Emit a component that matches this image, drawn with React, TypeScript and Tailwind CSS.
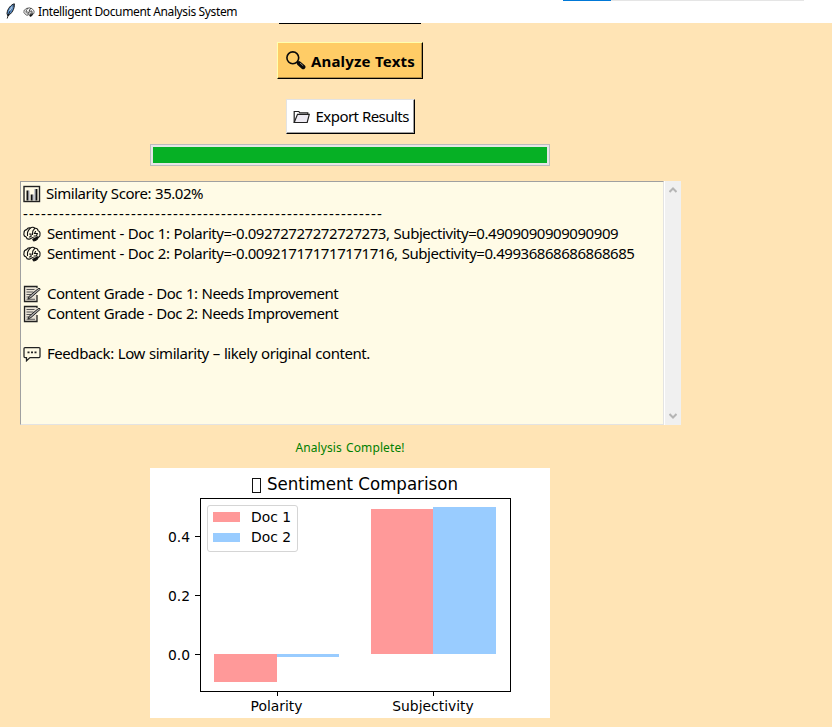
import type { ReactNode } from "react";

const ui = "font-['Noto_Sans','Segoe_UI',sans-serif]";

function Brain({ className }: { className?: string }) {
  return (
    <svg viewBox="0 0 18 16" className={className} fill="none" stroke="#111" strokeWidth="1.1" strokeLinecap="round">
      <path d="M12 12.500 9.500 11.500 7 13c-1.600.4-3.400-.3-3.800-1.900C1.500 10.500.5 9 1 7.300.9 5.400 2 3.800 3.600 3.600 4.500 2.200 6 1.700 7.300 2.100 8.800 1 11 1.300 11.800 2.300c1.900-.2 3 .7 3.200 2.100 1.600.8 2.400 2.200 1.900 3.700.4 1.500-.4 2.900-1.700 3.500" />
      <path d="M7.300 2.100C5.800 3.500 5 5 4.500 6.500M4.500 6.500v3M6.500 8H8v2.500L6.500 11M11.800 2.300 9.800 5M9.800 5 9.500 8.500M12.500 5.500 11.500 7.500h2.800L13.500 10H11" />
      <path d="M14.800 10.800c.4 2.400-1.300 3.600-4 4.200l-1-1.300 2.500-1.700Z" fill="#111" />
    </svg>
  );
}

function BarChart() {
  return (
    <svg viewBox="0 0 18 18" className="h-[18px] w-[18px]" fill="none">
      <rect x="1" y="1.500" width="15.500" height="15" stroke="#222" strokeWidth="1.400" />
      <path d="M4.500 5.500v10M8.700 9.500v6M13.400 4v11.500" stroke="#111" strokeWidth="2" />
      <path d="M6 5.500v10M10.200 9.500v6M11.900 4v11.500" stroke="#8c93ad" strokeWidth=".8" />
    </svg>
  );
}

function Memo() {
  return (
    <svg viewBox="0 0 18 18" className="h-[18px] w-[18px]" fill="none">
      <path d="M14 10v6.500H1.500v-15H14V3" stroke="#222" strokeWidth="1.300" fill="#e9e3d6" />
      <path d="M3.500 4.500h8M3.500 7h7M3.500 9.500h5M3.500 12h3M3.500 14.300h8.500" stroke="#555" strokeWidth="1.100" />
      <path d="M16 3 17.300 4.300 8 12.500l-3 1.500 1.200-2.800L16 3Z" fill="#aaa" stroke="#222" strokeWidth="1" />
    </svg>
  );
}

function Speech() {
  return (
    <svg viewBox="0 0 18 16" className="h-4 w-[18px]" fill="none" stroke="#222" strokeWidth="1.250">
      <path d="M2 1.500h14q1 0 1 1v8q0 1-1 1H7L3.500 14.800v-3.300H2q-1 0-1-1v-8q0-1 1-1Z" />
      <path d="M4.500 6.400h2M8 6.400h2M11.500 6.400h2" strokeWidth="1.800" />
    </svg>
  );
}

function Feather() {
  return (
    <svg viewBox="0 0 12 17" className="h-[17px] w-3">
      <path d="M9.300.8C6 1.800 2.500 5.500 2 10.500l.8 2.300C6.500 11 9.800 6 9.300.8Z" fill="#5a92cf" stroke="#111" strokeWidth="1" />
      <path d="M8.500 2.500C5.500 6 3.500 11 2.200 15.500" stroke="#111" fill="none" strokeWidth=".9" />
      <path d="M7.500 3.500 4.500 8" stroke="#b9d6f2" strokeWidth="1.200" />
    </svg>
  );
}

function Magnifier() {
  return (
    <svg viewBox="0 0 20 19" className="h-[19px] w-5" fill="none" stroke="#0a0a0a">
      <circle cx="6.800" cy="6.800" r="5.900" strokeWidth="1.600" />
      <path d="m11 11 2 1.800" strokeWidth="2" />
      <path d="m13 12.300 4.200 3.700" strokeWidth="4.400" strokeLinecap="round" />
      <path d="m14 12 3.200 2.800" stroke="#aaa089" strokeWidth=".8" />
    </svg>
  );
}

function Folder() {
  return (
    <svg viewBox="0 0 17 14" className="h-3.5 w-[17px]" fill="none" stroke="#222" strokeWidth="1.200">
      <path d="M1.200 12.500V1.500h4.600l1 1.300h8v1.200" />
      <path d="M1.200 12.500 4.500 4.300h11.800L14.200 12.500h-13Z" fill="#eeebf3" />
    </svg>
  );
}

function Line({ icon, children, className = "" }: { icon?: ReactNode; children?: ReactNode; className?: string }) {
  return (
    <div className="flex h-5 items-center whitespace-pre">
      {icon && <span className="mr-[6px] flex w-[18px] shrink-0 justify-center">{icon}</span>}
      <span className={`-mt-[2px] leading-5 ${className}`}>{children}</span>
    </div>
  );
}

function SentimentPlot() {
  return (
    <svg width="400" height="250" viewBox="150 468 400 250" className="mt-[11px] block bg-white font-['DejaVu_Sans',sans-serif] text-[13.89px]">
      <g shapeRendering="crispEdges">
        <path fill="#ff9999" d="M214 654h63v28h-63zM371 509h62v145h-62z" />
        <path fill="#99ccff" d="M277 654h62v3h-62zM433 507h63v147h-63z" />
        <path d="M200.500 498.500h310v193h-310zM195 536.500h5M195 595.500h5M195 654.500h5M277.500 692v4M433.500 692v4" stroke="#000" fill="none" />
      </g>
      <rect x="207.500" y="505.500" width="90" height="46" rx="2.500" fill="#fff" stroke="#d5d5d5" />
      <path fill="#ff9999" d="M213 512h27v10h-27z" />
      <path fill="#99ccff" d="M213 533h27v9h-27z" />
      <rect x="252.500" y="478.500" width="8" height="14" fill="none" stroke="#111" />
      <text x="267" y="490" className="text-[17.4px]" textLength="191" lengthAdjust="spacingAndGlyphs">Sentiment Comparison</text>
      <text x="251" y="522" textLength="40">Doc 1</text>
      <text x="251" y="542" textLength="40">Doc 2</text>
      <text x="190" y="542" textAnchor="end">0.4</text>
      <text x="190" y="601" textAnchor="end">0.2</text>
      <text x="190" y="660" textAnchor="end">0.0</text>
      <text x="276.500" y="711" textAnchor="middle">Polarity</text>
      <text x="433" y="711" textAnchor="middle">Subjectivity</text>
    </svg>
  );
}

export default function App() {
  return (
    <div className={`flex h-[727px] w-[832px] flex-col overflow-hidden bg-[#ffe4b5] text-black ${ui}`}>
      <header className="relative flex h-[23px] shrink-0 items-center bg-white pl-[5px]">
        <div className="absolute left-[563px] top-0 flex h-px w-[241px] bg-[#e5e5e5]">
          <div className="w-12 bg-[#0078d7]" />
        </div>
        <Feather />
        <Brain className="ml-[6px] h-[10px] w-3" />
        <span className="ml-[3px] text-[12px] leading-4 tracking-[-0.37px]">Intelligent Document Analysis System</span>
      </header>

      <main className="flex w-[700px] flex-col items-center">
        <div className="h-px w-[142px] bg-black" />
        <button className="mt-[18px] flex h-[37px] w-[146px] items-center border border-t-[#ffffae] border-l-[#ffffae] border-b-black border-r-black bg-[#ffcc66] pl-2 shadow-[inset_-1px_-1px_0_#b38f47]">
          <Magnifier />
          <span className="ml-[5px] mt-px whitespace-nowrap text-[15px] font-bold tracking-[0.15px] [word-spacing:0.5px]">Analyze Texts</span>
        </button>
        <button className="mt-5 flex h-[35px] w-[129px] items-center border border-t-[#e3e3e3] border-l-[#e3e3e3] border-b-black border-r-black bg-white pl-1.5 shadow-[inset_-1px_-1px_0_#a0a0a0]">
          <Folder />
          <span className="ml-[6px] whitespace-nowrap text-[15px] tracking-[-0.53px]">Export Results</span>
        </button>
        <div className="mt-2.5 h-[22px] w-[400px] border border-[#bcbcbc] bg-[#e6e6e6] p-[2px]">
          <div className="h-full w-full bg-[#06b025]" />
        </div>

        <section className="mt-[15px] ml-[1px] flex h-[244px] w-[661px]">
          <div className="w-[644px] border border-t-[#a0a0a0] border-l-[#a0a0a0] border-r-[#e3e3e3] border-b-[#e3e3e3] bg-[#fffbe6] pl-[2px] pt-[2px] text-[15px]">
            <Line icon={<BarChart />} className="-ml-px tracking-[-0.45px] [word-spacing:0.5px]">Similarity Score: 35.02%</Line>
            <Line className="tracking-[1.17px]">{"-".repeat(60)}</Line>
            <Line icon={<Brain className="h-4 w-[18px]" />} className="tracking-[-0.45px] [word-spacing:0.6px]">Sentiment - Doc 1: Polarity=-0.09272727272727273, Subjectivity=0.4909090909090909</Line>
            <Line icon={<Brain className="h-4 w-[18px]" />} className="tracking-[-0.45px] [word-spacing:0.6px]">Sentiment - Doc 2: Polarity=-0.009217171717171716, Subjectivity=0.49936868686868685</Line>
            <Line />
            <Line icon={<Memo />} className="tracking-[-0.52px] [word-spacing:0.6px]">Content Grade - Doc 1: Needs Improvement</Line>
            <Line icon={<Memo />} className="tracking-[-0.52px] [word-spacing:0.6px]">Content Grade - Doc 2: Needs Improvement</Line>
            <Line />
            <Line icon={<Speech />} className="tracking-[-0.45px] [word-spacing:0.6px]">Feedback: Low similarity – likely original content.</Line>
          </div>
          <div className="flex w-[17px] flex-col items-center justify-between border-l border-white bg-[#f0f0f0] py-[6px]">
            <svg width="8" height="6" viewBox="0 0 8 6" fill="none" stroke="#b5b5b5" strokeWidth="2"><path d="m.5 5 3.500-3.500L7.500 5" /></svg>
            <svg width="8" height="6" viewBox="0 0 8 6" fill="none" stroke="#b5b5b5" strokeWidth="2"><path d="M.5 1 4 4.500 7.500 1" /></svg>
          </div>
        </section>

        <div className="mt-[14px] h-[18px] text-[12px] leading-[18px] tracking-[0.1px] text-[#008000] [word-spacing:1px]">Analysis Complete!</div>
        <SentimentPlot />
      </main>
    </div>
  );
}
